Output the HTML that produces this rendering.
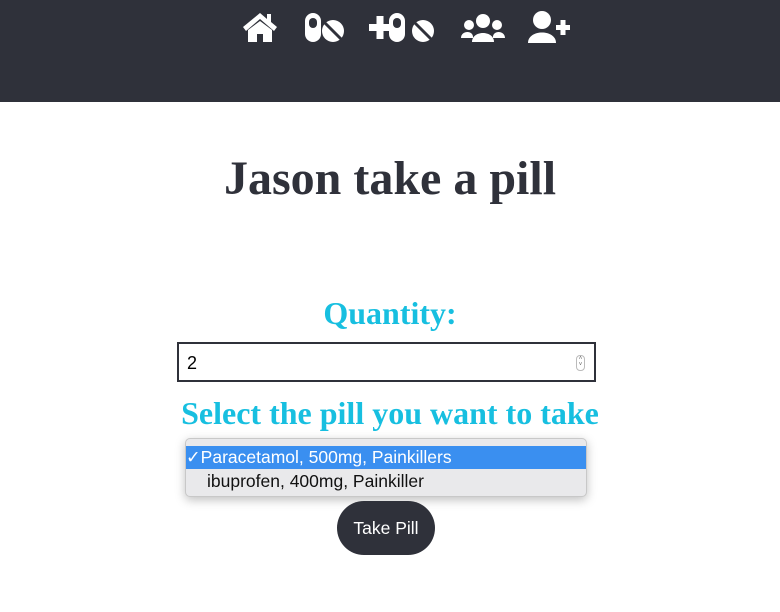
<!DOCTYPE html>
<html><head><meta charset="utf-8"><style>
body{margin:0;width:780px;height:612px;background:#fff;font-family:"Liberation Sans",sans-serif;position:relative;overflow:hidden}
.hdr{position:absolute;left:0;top:0;width:780px;height:102px;background:#2f313a}
.ic{position:absolute;top:10px}
h1{position:absolute;top:151px;left:0;width:780px;margin:0;text-align:center;font:bold 48px "Liberation Serif",serif;color:#2f313a}
.lab{position:absolute;left:0;width:780px;text-align:center;font:bold 32px "Liberation Serif",serif;color:#17bfe0;margin:0}
.inp{position:absolute;left:177px;top:342px;border:2px solid #2f313a;box-sizing:border-box;width:419px;height:40px}
.inp span{position:absolute;left:8px;top:9px;font-size:18px;color:#000}
.spin{position:absolute;right:9px;top:11px;width:7px;height:14px;border:1px solid #bbb;border-radius:4px;font-size:6px;line-height:6px;text-align:center;color:#666}
.dd{position:absolute;left:185px;top:438px;width:402px;height:59px;border-radius:5px;background:#e9e9eb;box-shadow:0 3px 10px rgba(0,0,0,.25);overflow:hidden;border:1px solid #c8c8c8;box-sizing:border-box}
.sel{position:absolute;left:0;top:7px;width:100%;height:23px;background:#3a8ff0;color:#fff;font-size:17.5px;line-height:23px}
.opt{position:absolute;left:21px;top:31px;font-size:17.5px;line-height:23px;color:#111}
.btn{position:absolute;left:337px;top:501px;width:98px;height:54px;border-radius:27px;background:#2f313a;color:#fff;font-size:17.5px;text-align:center;line-height:54px}
</style></head><body>
<div class="hdr">
<svg class="ic" style="left:242px" width="36" height="34" viewBox="0 0 36 34"><path d="M18 3 L1 17 L4 21 L18 9 L32 21 L35 17 L29 12 V4 H25 V9 Z" fill="#fff"/><path d="M6 20 L18 11 L30 20 V32 H21 V24 H15 V32 H6 Z" fill="#fff"/></svg>
<svg class="ic" style="left:304px" width="40" height="34" viewBox="0 0 40 34"><rect x="1" y="3" width="16" height="29" rx="8" fill="#fff"/><rect x="5" y="8" width="8" height="10" rx="4" fill="#2f313a"/><circle cx="29" cy="21" r="11" fill="#fff"/><path d="M21 13 L37 29" stroke="#2f313a" stroke-width="3"/></svg>
<svg class="ic" style="left:368px" width="68" height="34" viewBox="0 0 68 34"><rect x="1" y="14" width="22" height="7" fill="#fff"/><rect x="8.5" y="6" width="7" height="23" fill="#fff"/><rect x="21" y="3" width="16" height="29" rx="8" fill="#fff"/><rect x="25" y="8" width="8" height="10" rx="4" fill="#2f313a"/><circle cx="55" cy="21" r="11" fill="#fff"/><path d="M47 13 L63 29" stroke="#2f313a" stroke-width="3"/></svg>
<svg class="ic" style="left:461px" width="44" height="34" viewBox="0 0 44 34"><circle cx="22" cy="11" r="7" fill="#fff"/><path d="M11 32 C11 20 33 20 33 32 Z" fill="#fff"/><circle cx="8" cy="15" r="5" fill="#fff"/><circle cx="36" cy="15" r="5" fill="#fff"/><path d="M0 28 C0 20 13 20 12 28 Z M44 28 C44 20 31 20 32 28 Z" fill="#fff"/></svg>
<svg class="ic" style="left:528px" width="44" height="36" viewBox="0 0 44 36"><circle cx="14" cy="10" r="9" fill="#fff"/><path d="M0 33 C0 19 28 19 28 33 Z" fill="#fff"/><rect x="28" y="15" width="14" height="5" fill="#fff"/><rect x="32.5" y="10" width="5" height="15" fill="#fff"/></svg>
</div>
<h1>Jason take a pill</h1>
<p class="lab" style="top:295px">Quantity:</p>
<div class="inp"><span>2</span><div class="spin">˄<br>˅</div></div>
<p class="lab" style="top:395px">Select the pill you want to take</p>
<div class="dd"><div class="sel">✓Paracetamol, 500mg, Painkillers</div><div class="opt">ibuprofen, 400mg, Painkiller</div></div>
<div class="btn">Take Pill</div>
</body></html>
